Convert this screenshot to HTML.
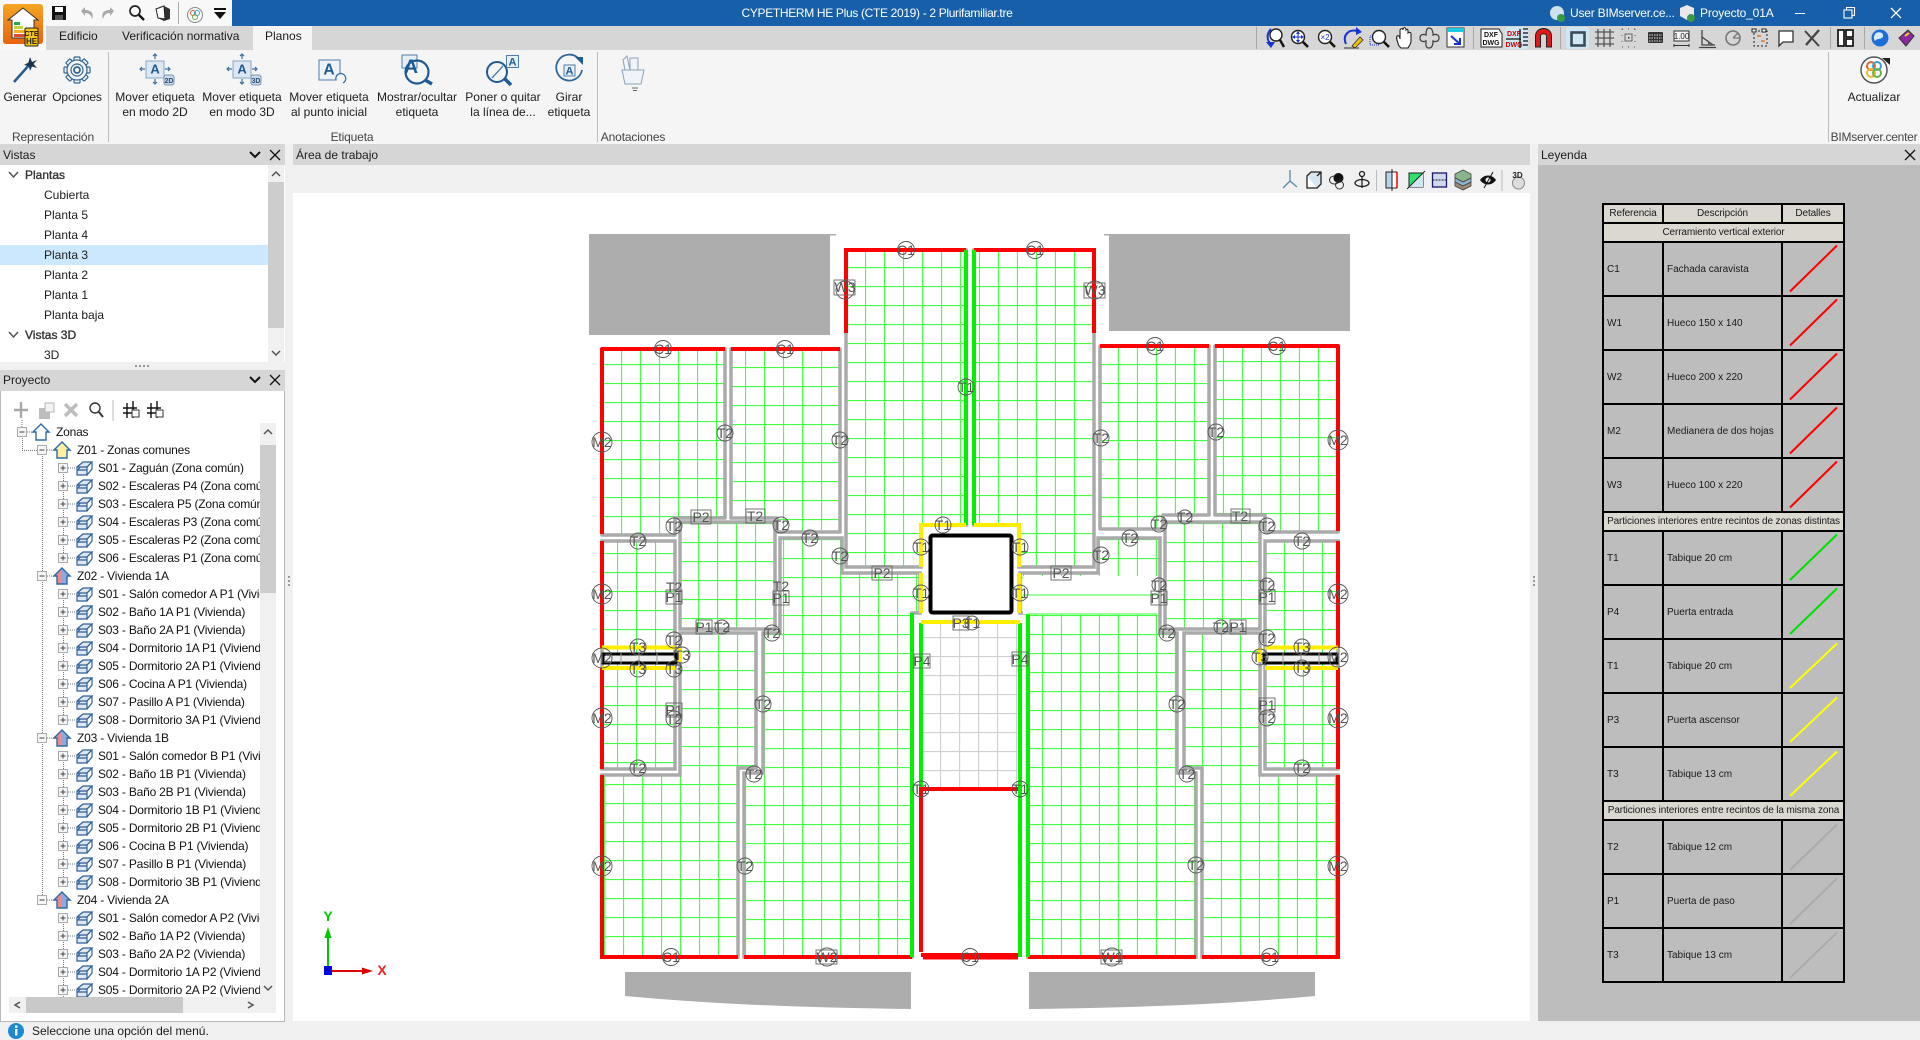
<!DOCTYPE html>
<html lang="es"><head><meta charset="utf-8"><title>CYPETHERM HE Plus</title>
<style>
html,body{margin:0;padding:0;width:1920px;height:1040px;overflow:hidden;background:#f0f0f0;font:12px/14px "Liberation Sans",sans-serif;color:#1c1c1c}
.a{position:absolute}
.t{position:absolute;white-space:nowrap;line-height:14px}
.c{width:110px;margin-left:-55px;text-align:center}
.g{letter-spacing:-.15px}
svg{position:absolute;left:0;top:0;overflow:visible}
svg text{font-family:"Liberation Sans",sans-serif}
table{position:absolute;left:1602px;top:203px;width:241px;border-collapse:collapse;table-layout:fixed;font-size:10px;line-height:12px;color:#1a1a1a}
td{border:2px solid #000;padding:2px 0 0 3px;height:50px;box-sizing:border-box;white-space:nowrap}
tr.h td{height:19px;background:#dbd8d2;text-align:center;padding:1px 0 0 0;letter-spacing:-.12px;overflow:hidden}
tr.b td{height:54px}
</style></head><body>

<!-- chrome -->
<div class="a" style="left:0;top:0;width:1920px;height:26px;background:#175fa9"></div>
<div class="a" style="left:0;top:0;width:232px;height:26px;background:#f8f8f8"></div>
<div class="a" style="left:0;top:26px;width:1920px;height:24px;background:#d6d6d6"></div>
<div class="a" style="left:0;top:0;width:46px;height:50px;background:#f8f8f8"></div>
<div class="a" style="left:253px;top:26px;width:59px;height:24px;background:#f5f5f5"></div>
<div class="a" style="left:0;top:50px;width:1920px;height:94px;background:#f5f5f5"></div>
<div class="a" style="left:0;top:144px;width:1920px;height:896px;background:#f0f0f0"></div>

<!-- panels -->
<div class="a" style="left:0;top:144px;width:285px;height:21px;background:#d6d6d6"></div>
<div class="a" style="left:0;top:165px;width:285px;height:197px;background:#fff"></div>
<div class="a" style="left:0;top:245px;width:268px;height:20px;background:#cce8ff"></div>
<div class="a" style="left:268px;top:165px;width:16px;height:197px;background:#f0f0f0"></div>
<div class="a" style="left:268px;top:182px;width:16px;height:146px;background:#cdcdcd"></div>
<div class="a" style="left:0;top:370px;width:285px;height:21px;background:#d6d6d6"></div>
<div class="a" style="left:0;top:391px;width:283px;height:630px;background:#fff;border:1px solid #b9b9b9;border-top:0;box-sizing:content-box"></div>
<div class="a" style="left:260px;top:423px;width:16px;height:574px;background:#f0f0f0"></div>
<div class="a" style="left:260px;top:445px;width:16px;height:148px;background:#cdcdcd"></div>
<div class="a" style="left:9px;top:997px;width:267px;height:16px;background:#f0f0f0"></div>
<div class="a" style="left:26px;top:997px;width:157px;height:16px;background:#c9c9c9"></div>
<div class="a" style="left:293px;top:144px;width:1237px;height:21px;background:#d6d6d6"></div>
<div class="a" style="left:293px;top:193px;width:1237px;height:828px;background:#fff"></div>
<div class="a" style="left:1538px;top:144px;width:382px;height:21px;background:#d6d6d6"></div>
<div class="a" style="left:1538px;top:165px;width:382px;height:856px;background:#bdbdbd"></div>

<!-- title & tabs -->
<div class="t" style="left:877px;top:6px;width:400px;margin-left:-200px;text-align:center;color:#fff;letter-spacing:-.33px">CYPETHERM HE Plus (CTE 2019) - 2 Plurifamiliar.tre</div>
<div class="t" style="left:1570px;top:6px;color:#fff;letter-spacing:-.2px">User BIMserver.ce...</div>
<div class="t" style="left:1700px;top:6px;color:#fff;letter-spacing:-.15px">Proyecto_01A</div>
<div class="t" style="left:59px;top:29px">Edificio</div>
<div class="t" style="left:122px;top:29px">Verificación normativa</div>
<div class="t" style="left:265px;top:29px">Planos</div>

<!-- ribbon text -->
<div class="t c g" style="left:25px;top:90px">Generar</div>
<div class="t c g" style="left:77px;top:90px">Opciones</div>
<div class="t c" style="left:155px;top:90px">Mover etiqueta</div><div class="t c" style="left:155px;top:105px">en modo 2D</div>
<div class="t c" style="left:242px;top:90px">Mover etiqueta</div><div class="t c" style="left:242px;top:105px">en modo 3D</div>
<div class="t c" style="left:329px;top:90px">Mover etiqueta</div><div class="t c" style="left:329px;top:105px">al punto inicial</div>
<div class="t c" style="left:417px;top:90px">Mostrar/ocultar</div><div class="t c" style="left:417px;top:105px">etiqueta</div>
<div class="t c" style="left:503px;top:90px">Poner o quitar</div><div class="t c" style="left:503px;top:105px">la línea de...</div>
<div class="t c" style="left:569px;top:90px">Girar</div><div class="t c" style="left:569px;top:105px">etiqueta</div>
<div class="t c" style="left:1874px;top:90px">Actualizar</div>
<div class="t c g" style="left:53px;top:130px;color:#444">Representación</div>
<div class="t c g" style="left:352px;top:130px;color:#444">Etiqueta</div>
<div class="t c g" style="left:633px;top:130px;color:#444">Anotaciones</div>
<div class="t c" style="left:1874px;top:130px;color:#444;letter-spacing:-.25px">BIMserver.center</div>

<!-- panel text -->
<div class="t" style="left:3px;top:148px">Vistas</div>
<div class="t" style="left:296px;top:148px">Área de trabajo</div>
<div class="t" style="left:1541px;top:148px">Leyenda</div>
<div class="t" style="left:3px;top:373px">Proyecto</div>
<div class="a" style="left:0;top:165px;width:268px;height:197px;overflow:hidden">
<div class="t" style="left:25px;top:3px;-webkit-text-stroke:.35px #333;color:#333">Plantas</div>
<div class="t" style="left:44px;top:23px">Cubierta</div>
<div class="t" style="left:44px;top:43px">Planta 5</div>
<div class="t" style="left:44px;top:63px">Planta 4</div>
<div class="t" style="left:44px;top:83px">Planta 3</div>
<div class="t" style="left:44px;top:103px">Planta 2</div>
<div class="t" style="left:44px;top:123px">Planta 1</div>
<div class="t" style="left:44px;top:143px">Planta baja</div>
<div class="t" style="left:25px;top:163px;-webkit-text-stroke:.35px #333;color:#333">Vistas 3D</div>
<div class="t" style="left:44px;top:183px">3D</div>
</div>
<div class="t" style="left:32px;top:1024px">Seleccione una opción del menú.</div>

<!-- legend -->
<table>
<colgroup><col style="width:60px"><col style="width:119px"><col style="width:62px"></colgroup>
<tr class="h"><td>Referencia</td><td>Descripción</td><td>Detalles</td></tr>
<tr class="h"><td colspan="3">Cerramiento vertical exterior</td></tr>
<tr class="b"><td>C1</td><td>Fachada caravista</td><td></td></tr>
<tr class="b"><td>W1</td><td>Hueco 150 x 140</td><td></td></tr>
<tr class="b"><td>W2</td><td>Hueco 200 x 220</td><td></td></tr>
<tr class="b"><td>M2</td><td>Medianera de dos hojas</td><td></td></tr>
<tr class="b"><td>W3</td><td>Hueco 100 x 220</td><td></td></tr>
<tr class="h"><td colspan="3">Particiones interiores entre recintos de zonas distintas</td></tr>
<tr class="b"><td>T1</td><td>Tabique 20 cm</td><td></td></tr>
<tr class="b"><td>P4</td><td>Puerta entrada</td><td></td></tr>
<tr class="b"><td>T1</td><td>Tabique 20 cm</td><td></td></tr>
<tr class="b"><td>P3</td><td>Puerta ascensor</td><td></td></tr>
<tr class="b"><td>T3</td><td>Tabique 13 cm</td><td></td></tr>
<tr class="h"><td colspan="3">Particiones interiores entre recintos de la misma zona</td></tr>
<tr class="b"><td>T2</td><td>Tabique 12 cm</td><td></td></tr>
<tr class="b"><td>P1</td><td>Puerta de paso</td><td></td></tr>
<tr class="b"><td>T3</td><td>Tabique 13 cm</td><td></td></tr>
</table>

<svg width="1920" height="1040" viewBox="0 0 1920 1040">
<defs>
<pattern id="pA" patternUnits="userSpaceOnUse" width="19" height="19" patternTransform="translate(621,364)"><path d="M.5 0V19M0 .5H19" stroke="#45ff45" stroke-width="1.200" fill="none"/></pattern>
<pattern id="pB" patternUnits="userSpaceOnUse" width="19" height="19" patternTransform="translate(745,367)"><path d="M.5 0V19M0 .5H19" stroke="#45ff45" stroke-width="1.200" fill="none"/></pattern>
<pattern id="pG" patternUnits="userSpaceOnUse" width="19" height="19" patternTransform="translate(865,267)"><path d="M.5 0V19M0 .5H19" stroke="#45ff45" stroke-width="1.200" fill="none"/></pattern>
<pattern id="pC" patternUnits="userSpaceOnUse" width="19" height="19" patternTransform="translate(617,553)"><path d="M.5 0V19M0 .5H19" stroke="#45ff45" stroke-width="1.200" fill="none"/></pattern>
<pattern id="pD" patternUnits="userSpaceOnUse" width="19" height="19" patternTransform="translate(698,542)"><path d="M.5 0V19M0 .5H19" stroke="#45ff45" stroke-width="1.200" fill="none"/></pattern>
<pattern id="pE" patternUnits="userSpaceOnUse" width="19" height="19" patternTransform="translate(802,615)"><path d="M.5 0V19M0 .5H19" stroke="#45ff45" stroke-width="1.200" fill="none"/></pattern>
<pattern id="pF" patternUnits="userSpaceOnUse" width="19" height="19" patternTransform="translate(623,784)"><path d="M.5 0V19M0 .5H19" stroke="#45ff45" stroke-width="1.200" fill="none"/></pattern>
<pattern id="pS" patternUnits="userSpaceOnUse" width="19" height="19" patternTransform="translate(940,637)"><path d="M.5 0V19M0 .5H19" stroke="#d0d0d0" stroke-width="1.300" fill="none"/></pattern>
<linearGradient id="hz"><stop offset=".5" stop-color="#ee8a8a"/><stop offset=".5" stop-color="#8fa9de"/></linearGradient>
<linearGradient id="org" x1="0" y1="0" x2="0" y2="1"><stop offset="0" stop-color="#f5a623"/><stop offset="1" stop-color="#e8630f"/></linearGradient>
<clipPath id="tc"><rect x="2" y="418" width="258" height="579"/></clipPath>
<g id="up"><g fill="#f5f5f5" stroke="#aaa"><rect x="-4.500" y="-4.500" width="9" height="9"/></g><path d="M-2.500 0H2.500M0-2.500V2.500" stroke="#444"/><path d="M5 0H13" stroke="#777" stroke-dasharray="1 1"/><g transform="translate(13,-7)" fill="#dfe7f3" stroke="#2d5f99" stroke-width="1.200"><path d="M1 6L7 1H16L11 6V14H1Z"/><path d="M1 6H11L16 1M11 14L16 8V1M4 6L2 9H11" fill="none"/></g></g>
<g id="um"><rect x="-4.500" y="-4.500" width="9" height="9" fill="#f5f5f5" stroke="#aaa"/><path d="M-2.500 0H2.500" stroke="#444"/><path d="M5 0H13" stroke="#777" stroke-dasharray="1 1"/></g>
<path id="hs" d="M0 8L8 0L16 8H13V16H3V8Z" stroke="#2d6aa8" stroke-width="1.400"/>
<g id="A"><text x="0" y="4.500" text-anchor="middle" font-size="13" font-weight="bold" fill="#1f5b93">A</text></g>
<g id="arrs" fill="none" stroke="#3d6f9f" stroke-width="1.200"><path d="M0-15V-10M-2-13L0-15 2-13M0 15V10M-2 13L0 15 2 13M-15 0H-10M-13-2L-15 0-13 2M15 0H10M13-2L15 0 13 2"/></g>
<g id="mag"><circle cx="0" cy="0" r="6.500" fill="#fff" stroke="#222" stroke-width="1.400"/><path d="M5 5L10 10" stroke="#111" stroke-width="2.600"/></g>
</defs>

<!-- ribbon separators -->
<g stroke="#bdbdbd"><path d="M108.500 52V142M597.500 52V142M1828.500 52V142"/></g>

<!-- app icon -->
<rect x="3" y="4" width="40" height="40" rx="3" fill="url(#org)"/>
<path d="M8 20L23 8 38 20H34V38H12V20Z" fill="#fff" stroke="#333" stroke-width="1"/>
<rect x="14" y="22" width="6" height="3" fill="#2aa84a"/><rect x="14" y="26" width="9" height="3" fill="#c4d63a"/><rect x="14" y="30" width="11" height="3" fill="#f2b32c"/><rect x="14" y="34" width="13" height="3" fill="#e04a2a"/>
<rect x="25" y="28" width="13" height="18" rx="1" fill="#f5c518" stroke="#222"/><text x="31.500" y="36" font-size="7" font-weight="bold" text-anchor="middle" fill="#222">CTE</text><text x="31.500" y="44" font-size="8" font-weight="bold" text-anchor="middle" fill="#222">HE</text>

<!-- quick access -->
<path d="M52 6H66V20H52Z" fill="#111"/><rect x="55" y="7" width="8" height="5" fill="#fff"/><rect x="55" y="15" width="8" height="5" fill="#555"/>
<path d="M81 11L85 7V10C92 10 94 14 92 19 91 15 89 13 85 13V16Z" fill="#a9a9a9"/>
<path d="M114 11L110 7V10C103 10 101 14 103 19 104 15 106 13 110 13V16Z" fill="#a9a9a9"/>
<circle cx="135" cy="11" r="5" fill="#fff" stroke="#222" stroke-width="1.700"/><path d="M139 15L144 20" stroke="#111" stroke-width="2.400"/>
<path d="M156 9L164 6 170 9V19L164 21 158 18Z" fill="#333"/><path d="M156 9L164 6 165 19 158 18Z" fill="#fff" stroke="#222"/>
<path d="M178.500 2V24" stroke="#aaa"/>
<circle cx="195" cy="15" r="7.500" fill="#fafafa" stroke="#888"/><circle cx="193" cy="13" r="2.500" fill="none" stroke="#e05a3a"/><circle cx="197" cy="13" r="2.500" fill="none" stroke="#3aa0d0"/><circle cx="195" cy="17" r="2.500" fill="none" stroke="#6ab04a"/>
<path d="M214 9H226" stroke="#111" stroke-width="2"/><path d="M214 12H226L220 19Z" fill="#111"/>

<!-- title bar right -->
<circle cx="1557" cy="13" r="7" fill="#cfe0ef"/><circle cx="1561" cy="18" r="4" fill="#3a9a46"/>
<path d="M1680 8L1687 5 1694 8V16L1687 20 1680 16Z" fill="#e8e8e8"/><circle cx="1691" cy="18" r="4" fill="#3a9a46"/>
<g stroke="#fff" fill="none"><path d="M1795 13.500H1805"/><rect x="1844" y="10" width="8" height="8" stroke-width="1.100"/><path d="M1846.500 10V7.500H1854.500V15.500H1852" stroke-width="1.100"/><path d="M1891 8L1901 18M1901 8L1891 18" stroke-width="1.300"/></g>

<!-- top-right toolbar -->
<g stroke="#a8a8a8"><path d="M1256.500 27V49M1473.500 27V49M1560.500 27V49M1830.500 27V49M1864.500 27V49"/></g>
<rect x="1505" y="27" width="23" height="22" rx="3" fill="#cfe6f5"/><rect x="1566" y="27" width="23" height="22" rx="3" fill="#cfe6f5"/>
<g transform="translate(1274,38)"><circle cx="2" cy="-3" r="6" fill="#fff" stroke="#222" stroke-width="1.400"/><path d="M6 2L10 9" stroke="#111" stroke-width="2.400"/><path d="M-3-9C-8-4-7 3-3 6" fill="none" stroke="#1533d0" stroke-width="2"/><path d="M-8 4H1L-3 10Z" fill="#1533d0"/></g>
<g transform="translate(1298,37)"><use href="#mag"/><path d="M0-6L2-3H-2ZM0 6L2 3H-2ZM-6 0L-3-2V2ZM6 0L3-2V2Z" fill="#1533d0"/><path d="M0-3V3M-3 0H3" stroke="#1533d0"/></g>
<g transform="translate(1325,37)"><use href="#mag"/><text x="0" y="3" text-anchor="middle" font-size="8" fill="#1533d0">×2</text></g>
<g transform="translate(1353,38)"><path d="M-7 6C-11-3-4-9 4-7" fill="none" stroke="#1533d0" stroke-width="2"/><path d="M3-11L9-6 3-3Z" fill="#1533d0"/><path d="M-1 8L7-1 10 2 2 10Z" fill="#f0c000" stroke="#333" stroke-width=".8"/><path d="M-9 10H6" stroke="#333"/></g>
<g transform="translate(1379,37)"><rect x="-9" y="-1" width="9" height="9" fill="none" stroke="#1533d0" stroke-dasharray="1 1"/><use href="#mag"/></g>
<path transform="translate(1404,38)" d="M-5 8C-7 3-8 0-7-2-5-3-4-1-4 1V-8C-3-10-1-10-1-8V-9C0-11 1-11 2-9V-8C3-9 4-9 4-7V-5C5-6 7-6 7-4V3C7 6 5 8 4 10H-3Z" fill="#fff" stroke="#222" stroke-width="1.100"/>
<g transform="translate(1430,38)" fill="none" stroke="#444" stroke-width="1.300"><path d="M-1-10C3-10 3-4 3-3 5-4 9-4 9 0S5 4 3 3C3 5 3 10-1 10S-4 5-4 3C-6 4-10 4-10 0S-6-4-4-3C-4-5-4-10-1-10Z"/></g>
<g transform="translate(1456,38)"><rect x="-9" y="-10" width="17" height="19" fill="#fff" stroke="#333"/><rect x="-9" y="-10" width="17" height="4" fill="#19c8e0"/><path d="M-5-2L4 6M4 0V6H-2" fill="none" stroke="#1533d0" stroke-width="2"/></g>
<g transform="translate(1491,38)"><path d="M-10-9H8L11-4V9H-10Z" fill="#fff" stroke="#222"/><text x="0" y="-1" text-anchor="middle" font-size="7" font-weight="bold" fill="#111">DXF</text><text x="0" y="7" text-anchor="middle" font-size="7" font-weight="bold" fill="#111">DWG</text></g>
<g transform="translate(1517,38)"><text x="-3" y="-2" text-anchor="middle" font-size="7" font-weight="bold" fill="#c00">DXF</text><text x="-3" y="9" text-anchor="middle" font-size="7" font-weight="bold" fill="#c00">DWG</text><path d="M-11 1H4M3-9V10M6-9H11M6-5H11M6-1H11M6 3H11M6 7H11" stroke="#111" stroke-width="1.300"/></g>
<path transform="translate(1543.500,38)" d="M-8 9V-2C-8-12 8-12 8-2V9H3V-2C3-5-3-5-3-2V9Z" fill="#e01818" stroke="#222"/>
<rect x="1571.500" y="32.500" width="13" height="13" fill="none" stroke="#3c4a58" stroke-width="2.600"/>
<g stroke="#555" stroke-width="1.300" fill="none"><path d="M1598 29V47M1604 29V47M1610 29V47M1595 32H1614M1595 38H1614M1595 44H1614"/></g>
<rect x="1625" y="34" width="7" height="7" fill="none" stroke="#666"/><path d="M1622 29H1635M1622 47H1635M1622 29V47M1635 29V47" stroke="#555" stroke-dasharray="1 5" fill="none"/><rect x="1628" y="37" width="1.500" height="1.500" fill="#333"/>
<rect x="1648" y="32" width="15" height="11" rx="1" fill="#333"/><path d="M1649 35H1662M1649 38H1662M1649 41H1662" stroke="#ddd" stroke-dasharray="1.500 1"/>
<rect x="1674" y="31" width="15" height="10" fill="#f4f4f4" stroke="#333"/><text x="1681.500" y="39" font-size="8" text-anchor="middle" fill="#222">1.00</text><path d="M1674 44V47M1689 44V47M1674 45.500H1689" stroke="#333"/>
<g fill="none" stroke="#444" stroke-width="1.300"><path d="M1702 30V45H1715M1702 37L1713 45M1708 41A6 6 0 0 1 1709 45M1699 47.500H1716"/><circle cx="1733" cy="38" r="7" stroke="#777" stroke-width="1.600"/><path d="M1733 38L1738 33M1733 38H1740" stroke="#777"/></g>
<rect x="1754" y="31" width="13" height="15" fill="none" stroke="#222" stroke-dasharray="2 2"/><rect x="1752" y="29" width="4" height="3" fill="#fff" stroke="#222"/><rect x="1762" y="29" width="4" height="3" fill="#fff" stroke="#222"/><path d="M1757 36H1761M1761 41H1765" stroke="#e07a2a" stroke-width="1.600"/>
<path d="M1779 31H1793V42H1783L1779 46Z" fill="#fff" stroke="#333" stroke-width="1.300"/>
<g stroke="#444" stroke-width="2" fill="none"><path d="M1805 31L1819 46"/><path d="M1819 30L1806 45" stroke-width="2.400"/></g>
<g fill="#fff" stroke="#111" stroke-width="1.700"><rect x="1838" y="30" width="6" height="16"/><rect x="1846" y="30" width="7" height="7"/><rect x="1846" y="39" width="7" height="7"/></g>
<circle cx="1880" cy="38" r="8.500" fill="#1d6fd8"/><path d="M1876 33C1880 31 1884 33 1883 37 1880 40 1877 38 1875 41 1873 38 1874 35 1876 33Z" fill="#d8ecff"/>
<path d="M1899 38L1908 30 1914 36 1906 46Z" fill="#8a2aa0" stroke="#333"/><path d="M1905 36L1909 33" stroke="#f0d020" stroke-width="2"/>

<!-- ribbon icons -->
<path d="M14 82L30 64" stroke="#2a5d91" stroke-width="2.600"/><path d="M30 57L32 62 37 60 33.500 64 37 68 32 66.500 30 71 29 66 24 65 28.500 62.500Z" fill="#16324f"/>
<g transform="translate(77,70)" fill="#f5f5f5" stroke="#2f6797" stroke-width="1.200"><rect x="-3" y="-13" width="6" height="26" rx="1"/><rect x="-3" y="-13" width="6" height="26" rx="1" transform="rotate(45)"/><rect x="-3" y="-13" width="6" height="26" rx="1" transform="rotate(90)"/><rect x="-3" y="-13" width="6" height="26" rx="1" transform="rotate(135)"/><circle r="10" stroke="none"/><circle r="10" fill="none"/><circle r="6"/><circle r="3" stroke-width="1.800"/></g>
<g transform="translate(155,69)"><rect x="-9" y="-8" width="18" height="17" fill="#dde8f4" stroke="#88a6c6"/><use href="#A"/><use href="#arrs"/><rect x="9" y="6" width="10" height="10" rx="2" fill="#cdd9e6" stroke="#7d97b4"/><text x="14" y="14" font-size="7" font-weight="bold" text-anchor="middle" fill="#234f7c">2D</text></g>
<g transform="translate(242,69)"><rect x="-9" y="-8" width="18" height="17" fill="#dde8f4" stroke="#88a6c6"/><use href="#A"/><use href="#arrs"/><rect x="9" y="6" width="10" height="10" rx="2" fill="#cdd9e6" stroke="#7d97b4"/><text x="14" y="14" font-size="7" font-weight="bold" text-anchor="middle" fill="#234f7c">3D</text></g>
<g transform="translate(329,70)"><rect x="-10" y="-10" width="21" height="20" fill="#eef3f9" stroke="#4e7dab"/><use href="#A" transform="translate(0,-1) scale(1.200)"/><path d="M7 10A5 5 0 1 1 14 13" fill="#f5f5f5" stroke="#2a6aa0" stroke-width="1.200"/></g>
<g><rect x="402" y="55" width="15" height="13" fill="#e8eef6" stroke="#4e7dab"/><circle cx="417" cy="72" r="11.500" fill="none" stroke="#1f5a94" stroke-width="2.200"/><use href="#A" transform="translate(411,66) scale(1.500)"/><path d="M425 80L432 84" stroke="#1f5a94" stroke-width="3.500"/></g>
<g><circle cx="497" cy="72" r="10" fill="none" stroke="#1f5a94" stroke-width="2"/><path d="M492 78L503 66" stroke="#4e7dab" stroke-width="1.300"/><path d="M505 79L511 85" stroke="#1f5a94" stroke-width="3.500"/><rect x="506.500" y="55.500" width="12" height="12" fill="#e8eef6" stroke="#4e7dab"/><use href="#A" transform="translate(512.500,61.500) scale(.85)"/></g>
<g><path d="M579 59A13 13 0 1 0 582 70" fill="none" stroke="#2f6797" stroke-width="1.800"/><path d="M575 57H583V65Z" fill="#1f5a94"/><rect x="564" y="65" width="11" height="11" fill="#e8eef6" stroke="#4e7dab"/><use href="#A" transform="translate(569.500,70.500) scale(.85)"/></g>
<g fill="#f0f4f8" stroke="#8aa2bb"><path d="M622 70H644L641 84H625Z"/><rect x="630" y="58" width="8" height="12"/><path d="M623 60L627 56 630 70 625 70Z"/><path d="M632 88H638M633 90.500H637" stroke="#666"/></g>
<g><circle cx="1874" cy="70" r="13" fill="#fff" stroke="#555" stroke-width="1.500"/><circle cx="1871" cy="66" r="4" fill="none" stroke="#e8622c" stroke-width="2"/><circle cx="1877" cy="66" r="4" fill="none" stroke="#3aa0d0" stroke-width="2"/><circle cx="1871" cy="73" r="4" fill="none" stroke="#f0b82c" stroke-width="2"/><circle cx="1877" cy="73" r="4" fill="none" stroke="#6ab04a" stroke-width="2"/><path d="M1882 58H1890V65Z" fill="#222"/></g>

<!-- panel controls -->
<g fill="none" stroke="#111" stroke-width="2"><path d="M250 152L255 157 260 152M250 377L255 382 260 377"/></g>
<g fill="none" stroke="#111" stroke-width="1.300"><path d="M270 150L280 160M280 150L270 160M270 375L280 385M280 375L270 385M1905 150L1915 160M1915 150L1905 160"/></g>
<path d="M9 172L13.500 177 18 172M9 332L13.500 337 18 332" fill="none" stroke="#555" stroke-width="1.500"/>
<path d="M272 176L276 172 280 176M272 351L276 355 280 351M264 434L268 430 272 434M264 986L268 990 272 986M20 1002L15 1005 20 1008M248 1002L253 1005 248 1008" fill="none" stroke="#555" stroke-width="1.500"/>
<g fill="#999"><rect x="135" y="365" width="2" height="2"/><rect x="139" y="365" width="2" height="2"/><rect x="143" y="365" width="2" height="2"/><rect x="147" y="365" width="2" height="2"/><rect x="288" y="576" width="2" height="2"/><rect x="288" y="580" width="2" height="2"/><rect x="288" y="584" width="2" height="2"/><rect x="1533" y="576" width="2" height="2"/><rect x="1533" y="580" width="2" height="2"/><rect x="1533" y="584" width="2" height="2"/></g>

<!-- project toolbar -->
<path d="M21 402V418M14 410H28" stroke="#a8a8a8" stroke-width="2.400"/>
<rect x="39" y="408" width="11" height="11" fill="#bdbdbd"/><rect x="45" y="403" width="9" height="9" fill="#f2f2f2" stroke="#b5b5b5"/>
<path d="M65 404L77 416M77 404L65 416" stroke="#bdbdbd" stroke-width="3.400"/>
<circle cx="95" cy="408" r="5" fill="#fff" stroke="#333" stroke-width="1.400"/><path d="M99 412L103 417" stroke="#333" stroke-width="2"/>
<path d="M113 400V421" stroke="#bbb"/>
<path d="M123 408H137M123 413H137M127 403V418M133 401V418" stroke="#111" stroke-width="1.400"/><rect x="132" y="410" width="7" height="7" fill="#fff" stroke="#333"/>
<path d="M147 408H161M147 413H161M151 403V418M157 401V418" stroke="#111" stroke-width="1.400"/><rect x="156" y="410" width="7" height="7" fill="#fff" stroke="#333"/>

<!-- tree -->
<g clip-path="url(#tc)">
<g stroke="#777" stroke-dasharray="1 1" fill="none"><path d="M22 420V428M22.500 438V450.500H37M42.500 456V900M63.500 474V558M63.500 600V720M63.500 762V882M63.500 924V1000"/><path d="M27 432H39"/></g>
<use href="#um" x="22" y="432"/><use href="#um" x="42" y="450"/><use href="#um" x="42" y="576"/><use href="#um" x="42" y="738"/><use href="#um" x="42" y="900"/>
<use href="#hs" x="33" y="424" fill="#fff"/><use href="#hs" x="54" y="442" fill="#ffeea0"/><use href="#hs" x="54" y="568" fill="url(#hz)"/><use href="#hs" x="54" y="730" fill="url(#hz)"/><use href="#hs" x="54" y="892" fill="url(#hz)"/>
<use href="#up" x="63" y="468"/><use href="#up" x="63" y="486"/><use href="#up" x="63" y="504"/><use href="#up" x="63" y="522"/><use href="#up" x="63" y="540"/><use href="#up" x="63" y="558"/>
<use href="#up" x="63" y="594"/><use href="#up" x="63" y="612"/><use href="#up" x="63" y="630"/><use href="#up" x="63" y="648"/><use href="#up" x="63" y="666"/><use href="#up" x="63" y="684"/><use href="#up" x="63" y="702"/><use href="#up" x="63" y="720"/>
<use href="#up" x="63" y="756"/><use href="#up" x="63" y="774"/><use href="#up" x="63" y="792"/><use href="#up" x="63" y="810"/><use href="#up" x="63" y="828"/><use href="#up" x="63" y="846"/><use href="#up" x="63" y="864"/><use href="#up" x="63" y="882"/>
<use href="#up" x="63" y="918"/><use href="#up" x="63" y="936"/><use href="#up" x="63" y="954"/><use href="#up" x="63" y="972"/><use href="#up" x="63" y="990"/>
<g font-size="12" fill="#111" letter-spacing="-.2">
<text x="56" y="436">Zonas</text>
<text x="77" y="454">Z01 - Zonas comunes</text>
<text x="98" y="472">S01 - Zaguán (Zona común)</text>
<text x="98" y="490">S02 - Escaleras P4 (Zona común)</text>
<text x="98" y="508">S03 - Escalera P5 (Zona común)</text>
<text x="98" y="526">S04 - Escaleras P3 (Zona común)</text>
<text x="98" y="544">S05 - Escaleras P2 (Zona común)</text>
<text x="98" y="562">S06 - Escaleras P1 (Zona común)</text>
<text x="77" y="580">Z02 - Vivienda 1A</text>
<text x="98" y="598">S01 - Salón comedor A P1 (Vivienda)</text>
<text x="98" y="616">S02 - Baño 1A P1 (Vivienda)</text>
<text x="98" y="634">S03 - Baño 2A P1 (Vivienda)</text>
<text x="98" y="652">S04 - Dormitorio 1A P1 (Vivienda)</text>
<text x="98" y="670">S05 - Dormitorio 2A P1 (Vivienda)</text>
<text x="98" y="688">S06 - Cocina A P1 (Vivienda)</text>
<text x="98" y="706">S07 - Pasillo A P1 (Vivienda)</text>
<text x="98" y="724">S08 - Dormitorio 3A P1 (Vivienda)</text>
<text x="77" y="742">Z03 - Vivienda 1B</text>
<text x="98" y="760">S01 - Salón comedor B P1 (Vivienda)</text>
<text x="98" y="778">S02 - Baño 1B P1 (Vivienda)</text>
<text x="98" y="796">S03 - Baño 2B P1 (Vivienda)</text>
<text x="98" y="814">S04 - Dormitorio 1B P1 (Vivienda)</text>
<text x="98" y="832">S05 - Dormitorio 2B P1 (Vivienda)</text>
<text x="98" y="850">S06 - Cocina B P1 (Vivienda)</text>
<text x="98" y="868">S07 - Pasillo B P1 (Vivienda)</text>
<text x="98" y="886">S08 - Dormitorio 3B P1 (Vivienda)</text>
<text x="77" y="904">Z04 - Vivienda 2A</text>
<text x="98" y="922">S01 - Salón comedor A P2 (Vivienda)</text>
<text x="98" y="940">S02 - Baño 1A P2 (Vivienda)</text>
<text x="98" y="958">S03 - Baño 2A P2 (Vivienda)</text>
<text x="98" y="976">S04 - Dormitorio 1A P2 (Vivienda)</text>
<text x="98" y="994">S05 - Dormitorio 2A P2 (Vivienda)</text>
</g>
</g>

<!-- status info -->
<circle cx="16" cy="1031" r="8" fill="#1b8ad0"/><rect x="15" y="1029" width="2.400" height="6.500" fill="#fff"/><rect x="15" y="1025.500" width="2.400" height="2.400" fill="#fff"/>

<!-- work toolbar -->
<g transform="translate(1290,180)" stroke="#5b8aa8" stroke-width="1.300" fill="none"><path d="M0 1V-10M0 1L-7 8M0 1L7 7"/></g>
<g transform="translate(1314,180)" fill="#fff" stroke="#222" stroke-width="1.300"><path d="M-7-4H3V8H-7Z"/><path d="M-7-4L-3-8H7V4L3 8M3-4L7-8" fill="#d8e6f2"/></g>
<g transform="translate(1337.500,180)"><ellipse cx="-3" cy="0" rx="5" ry="4" fill="none" stroke="#333"/><circle cx="1" cy="-2" r="5" fill="#111"/><circle cx="2" cy="5" r="4" fill="none" stroke="#333"/></g>
<g transform="translate(1362,180)" fill="none" stroke="#222" stroke-width="1.300"><circle cx="0" cy="-6" r="2.500"/><path d="M0-3V8"/><ellipse cx="0" cy="3" rx="7" ry="3.500"/></g>
<path d="M1376.500 170V191" stroke="#bbb"/>
<g transform="translate(1392,180)"><rect x="-6" y="-8" width="6" height="16" fill="#b5d5ea"/><rect x="0" y="-8" width="5" height="16" fill="#fff"/><path d="M-6-8H5V8H-6ZM0-11V11" fill="none" stroke="#222"/><path d="M5-8V8" stroke="#e00" stroke-width="1.500"/></g>
<g transform="translate(1416,180)"><path d="M-7-7H7V7H-7Z" fill="#2ee06e" stroke="#222"/><path d="M-7 7L7-7V7Z" fill="#cfe6f5"/><path d="M-9 9L9-9" stroke="#222"/></g>
<g transform="translate(1439.500,180)"><rect x="-7" y="-7" width="14" height="14" fill="#cfd8f0" stroke="#1a1a6a" stroke-width="1.300"/><path d="M-7 0H7" stroke="#222" stroke-dasharray="2 1"/></g>
<g transform="translate(1463,180)" stroke="#444" stroke-width=".8"><path d="M0-10L8-6V-2L0 2-8-2V-6Z" fill="#8ab48a"/><path d="M-8-2L0 2 8-2V2L0 6-8 2Z" fill="#8fb3d0"/><path d="M-8 2L0 6 8 2V6L0 10-8 6Z" fill="#9c8a7a"/></g>
<g transform="translate(1488,180)"><path d="M-8 0C-4-6 4-6 8 0 4 6-4 6-8 0Z" fill="#111"/><circle r="2.500" fill="#eee"/><path d="M-4 8L5-8" stroke="#111"/></g>
<path d="M1502 170V191" stroke="#bbb"/>
<g transform="translate(1517.500,180)"><circle cx="1" cy="3" r="6" fill="#ddd" stroke="#888"/><text x="0" y="-2" font-size="8" font-weight="bold" text-anchor="middle" fill="#222">3D</text></g>

<!-- legend diagonals -->
<g stroke-width="2" fill="none">
<g stroke="#ff0000"><path d="M1790 291.500L1837 245.500M1790 345.500L1837 299.500M1790 399.500L1837 353.500M1790 453.500L1837 407.500M1790 507.500L1837 461.500"/></g>
<g stroke="#00e000"><path d="M1790 580L1837 534.500M1790 634L1837 588.500"/></g>
<g stroke="#ffff00"><path d="M1790 688L1837 643.500M1790 742L1837 697.500M1790 796L1837 751.500"/></g>
<g stroke="#a8a8a8" stroke-width="1.600"><path d="M1790 870L1837 824.500M1790 924L1837 878.500M1790 978L1837 932.500"/></g>
</g>

<!-- plan: gray blocks -->
<g fill="#adadad"><rect x="589" y="234" width="241" height="101"/><rect x="830" y="234" width="6" height="1.500"/><rect x="1109" y="234" width="241" height="97"/><rect x="1104" y="234" width="5" height="1.500"/>
<path d="M625 972H911V1009C820 1008 720 1005 625 996Z"/><path d="M1315 972H1029V1009C1120 1008 1220 1005 1315 996Z"/></g>

<!-- half groups -->
<g id="hA" stroke="#aaa" stroke-width="3.500" stroke-linejoin="round">
<path fill="url(#pA)" d="M602 349H725V518H675V535H602Z"/>
<path fill="url(#pB)" d="M731 349H840V532H777V518H731Z"/>
<g fill="none" stroke="#ff0000" stroke-width="4"><path d="M602 534V349H725M731 349H840"/></g>
</g>
<g id="hB" stroke="#aaa" stroke-width="3.500" stroke-linejoin="miter">
<path fill="url(#pG)" d="M846 250H966V525H921V567H846Z"/>
<path fill="url(#pC)" d="M602 541H675V769H602Z"/>
<path fill="url(#pD)" d="M680 522H775V629H680Z"/>
<path fill="url(#pE)" d="M780 538H842V573H920V613H912V957H744V773H763V633H780Z"/>
<path fill="url(#pF)" d="M602 775H680V633H756V768H738V957H602Z"/>
<g fill="none" stroke-width="4">
<path stroke="#ff0000" d="M846 333V250H966M602 541V648M602 668V769M602 775V957H738M744 957H912"/>
<path stroke="#00f000" stroke-width="4" d="M966 250V525M912 613V957"/>
<path stroke="#ffee00" d="M921 567V525H966M921 573V613"/>
<path stroke="#ffee00" d="M602 647.500H675M602 668H675M680 648V662"/>
</g>
<rect x="603" y="654" width="73" height="9" fill="#eee" stroke="#000" stroke-width="3"/>
<path d="M639 653V664M621 653V664M657 653V664" stroke="#999" stroke-width="1" fill="none"/>
</g>
<use href="#hA" transform="translate(1940,-3) scale(-1,1)"/>
<use href="#hB" transform="translate(1940,0) scale(-1,1)"/>

<!-- right-side landing: horizontals only -->
<rect x="1023" y="576" width="134" height="38" fill="#fff"/>
<path d="M1023 595H1157M1027 614H1157" stroke="#60ff60" stroke-width="1.300" fill="none"/>

<!-- center core -->
<rect x="921" y="623" width="99" height="166" fill="url(#pS)"/>
<g fill="none" stroke-width="4">
<path stroke="#00f000" d="M921 623V789M1020 623V957"/>
<path stroke="#ff0000" d="M921 952V789H1018M921 955H1018"/>
<path stroke="#ff0000" d="M923 957.500H1018"/>
<path stroke="#ffee00" d="M921 622H1020"/>
</g>
<rect x="930.500" y="535.500" width="81" height="77" rx="2" fill="#fff" stroke="#000" stroke-width="4"/>

<!-- labels -->
<g fill="none" stroke="#555" stroke-width=".9">
<circle cx="906" cy="250" r="8.500"/><circle cx="663" cy="349" r="8.500"/><circle cx="785" cy="349" r="8.500"/><circle cx="845" cy="290" r="9"/><circle cx="602" cy="442" r="10"/><circle cx="725" cy="433" r="8"/><circle cx="840" cy="440" r="8"/><circle cx="966" cy="387" r="8"/><circle cx="674" cy="526" r="8"/><circle cx="781" cy="525" r="8"/><circle cx="638" cy="541" r="8"/><circle cx="810" cy="538" r="8"/><circle cx="840" cy="556" r="8"/><circle cx="943" cy="525" r="8"/><circle cx="921" cy="547" r="8"/><circle cx="921" cy="593" r="8"/><circle cx="602" cy="594" r="10"/>
<circle cx="722" cy="627" r="7"/><circle cx="772" cy="633" r="8"/><circle cx="674" cy="640" r="8"/><circle cx="638" cy="647" r="8"/><circle cx="682" cy="655" r="8"/><circle cx="602" cy="658" r="10"/><circle cx="638" cy="669" r="8"/><circle cx="674" cy="669" r="8"/><circle cx="674" cy="719" r="8"/><circle cx="638" cy="768" r="8"/><circle cx="763" cy="704" r="8"/><circle cx="754" cy="774" r="8"/><circle cx="602" cy="718" r="10"/><circle cx="602" cy="866" r="10"/><circle cx="745" cy="866" r="8"/><circle cx="671" cy="957" r="8.500"/><circle cx="827" cy="957" r="9"/><circle cx="972" cy="623" r="7"/><circle cx="921" cy="789" r="8"/><circle cx="1020" cy="789" r="8"/><circle cx="970" cy="957" r="8.500"/>
<circle cx="1035" cy="250" r="8.500"/><circle cx="1095" cy="290" r="9"/><circle cx="1155" cy="346" r="8.500"/><circle cx="1277" cy="346" r="8.500"/><circle cx="1101" cy="438" r="8"/><circle cx="1216" cy="432" r="8"/><circle cx="1338" cy="440" r="10"/><circle cx="1185" cy="517" r="7"/><circle cx="1159" cy="524" r="8"/><circle cx="1267" cy="526" r="8"/><circle cx="1130" cy="538" r="8"/><circle cx="1302" cy="541" r="8"/><circle cx="1101" cy="555" r="8"/><circle cx="1020" cy="547" r="8"/><circle cx="1020" cy="593" r="8"/><circle cx="1338" cy="594" r="10"/><circle cx="1159" cy="585" r="7"/><circle cx="1267" cy="585" r="7"/>
<circle cx="1167" cy="633" r="8"/><circle cx="1221" cy="627" r="7"/><circle cx="1267" cy="638" r="8"/><circle cx="1302" cy="647" r="8"/><circle cx="1260" cy="657" r="8"/><circle cx="1338" cy="657" r="10"/><circle cx="1302" cy="668" r="8"/><circle cx="1267" cy="718" r="8"/><circle cx="1338" cy="718" r="10"/><circle cx="1177" cy="704" r="8"/><circle cx="1187" cy="774" r="8"/><circle cx="1302" cy="768" r="8"/><circle cx="1196" cy="865" r="8"/><circle cx="1338" cy="866" r="10"/><circle cx="1112" cy="957" r="9"/><circle cx="1270" cy="957" r="8.500"/>
</g>
<g fill="none" stroke="#666" stroke-width=".9">
<rect x="834" y="280" width="21" height="15"/><rect x="1084" y="283" width="21" height="15"/><rect x="691" y="510" width="20" height="14"/><rect x="746" y="509" width="19" height="14"/><rect x="872" y="566" width="20" height="14"/><rect x="666" y="590" width="16" height="14"/><rect x="773" y="591" width="16" height="14"/><rect x="696" y="620" width="16" height="14"/><rect x="666" y="703" width="16" height="14"/><rect x="816" y="950" width="21" height="14"/><rect x="914" y="654" width="16" height="14"/><rect x="1012" y="652" width="16" height="14"/><rect x="953" y="616" width="16" height="14"/><rect x="1051" y="566" width="20" height="14"/><rect x="1231" y="509" width="19" height="14"/><rect x="1151" y="591" width="16" height="14"/><rect x="1259" y="590" width="16" height="14"/><rect x="1230" y="620" width="16" height="14"/><rect x="1259" y="698" width="16" height="14"/><rect x="1101" y="950" width="21" height="14"/>
</g>
<g font-size="14" fill="#555" text-anchor="middle">
<text x="906" y="255">C1</text><text x="663" y="354">C1</text><text x="785" y="354">C1</text><text x="845" y="292">W3</text><text x="602" y="447">M2</text><text x="725" y="438">T2</text><text x="840" y="445">T2</text><text x="966" y="392">T1</text><text x="701" y="522">P2</text><text x="674" y="531">T2</text><text x="755" y="521">T2</text><text x="781" y="530">T2</text><text x="638" y="546">T2</text><text x="810" y="543">T2</text><text x="840" y="561">T2</text><text x="882" y="578">P2</text><text x="943" y="530">T1</text><text x="921" y="552">T1</text><text x="921" y="598">T1</text><text x="602" y="599">M2</text><text x="674" y="592">T2</text><text x="674" y="602">P1</text><text x="781" y="591">T2</text><text x="781" y="603">P1</text>
<text x="704" y="632">P1</text><text x="722" y="632">T2</text><text x="772" y="638">T2</text><text x="674" y="645">T2</text><text x="638" y="652">T3</text><text x="682" y="660">T3</text><text x="602" y="663">M2</text><text x="638" y="674">T3</text><text x="674" y="674">T3</text><text x="674" y="715">P1</text><text x="674" y="724">T2</text><text x="638" y="773">T2</text><text x="763" y="709">T2</text><text x="754" y="779">T2</text><text x="602" y="723">M2</text><text x="602" y="871">M2</text><text x="745" y="871">T2</text><text x="671" y="962">C1</text><text x="827" y="962">W2</text><text x="922" y="666">P4</text><text x="1020" y="664">P4</text><text x="961" y="628">P3</text><text x="972" y="628">T1</text><text x="921" y="794">T1</text><text x="1020" y="794">T1</text><text x="970" y="962">C1</text>
<text x="1035" y="255">C1</text><text x="1095" y="295">W3</text><text x="1155" y="351">C1</text><text x="1277" y="351">C1</text><text x="1101" y="443">T2</text><text x="1216" y="437">T2</text><text x="1338" y="445">M2</text><text x="1185" y="522">T2</text><text x="1159" y="529">T2</text><text x="1240" y="521">T2</text><text x="1267" y="531">T2</text><text x="1130" y="543">T2</text><text x="1302" y="546">T2</text><text x="1101" y="560">T2</text><text x="1061" y="578">P2</text><text x="1020" y="552">T1</text><text x="1020" y="598">T1</text><text x="1338" y="599">M2</text><text x="1159" y="590">T2</text><text x="1159" y="603">P1</text><text x="1267" y="590">T2</text><text x="1267" y="602">P1</text>
<text x="1167" y="638">T2</text><text x="1221" y="632">T2</text><text x="1238" y="632">P1</text><text x="1267" y="643">T2</text><text x="1302" y="652">T3</text><text x="1260" y="662">T3</text><text x="1338" y="662">M2</text><text x="1302" y="673">T3</text><text x="1267" y="710">P1</text><text x="1267" y="723">T2</text><text x="1338" y="723">M2</text><text x="1177" y="709">T2</text><text x="1187" y="779">T2</text><text x="1302" y="773">T2</text><text x="1196" y="870">T2</text><text x="1338" y="871">M2</text><text x="1112" y="962">W1</text><text x="1270" y="962">C1</text>
</g>

<!-- axes -->
<g font-size="14" font-weight="bold">
<path d="M328 966V934" stroke="#00c800" stroke-width="2"/><path d="M324.500 938L328 927 331.500 938Z" fill="#00c800"/><text x="328" y="921" text-anchor="middle" fill="#00c800">Y</text>
<path d="M330 971H364" stroke="#e00000" stroke-width="2"/><path d="M362 967.500L373 971 362 974.500Z" fill="#e00000"/><text x="382" y="975" text-anchor="middle" fill="#ee2020">X</text>
<rect x="324" y="966" width="8" height="9" fill="#0000d0"/><text x="328" y="975" font-size="12" text-anchor="middle" fill="#0000ff">Z</text>
</g>
</svg>
</body></html>
